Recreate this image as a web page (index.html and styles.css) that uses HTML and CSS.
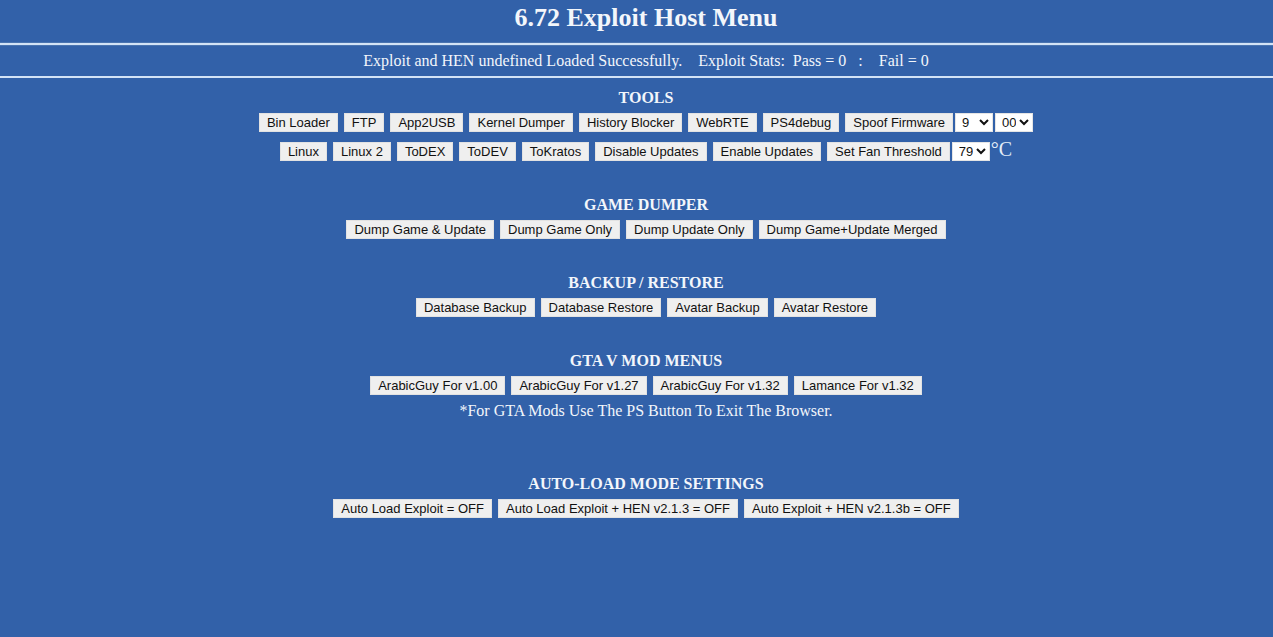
FILE: index.html
```html
<!DOCTYPE html>
<html>
<head>
<meta charset="utf-8">
<title>6.72 Exploit Host Menu</title>
<link rel="stylesheet" href="styles.css">
</head>
<body>
<header class="top">
  <h1 class="title">6.72 Exploit Host Menu</h1>
  <div class="status">Exploit and HEN undefined Loaded Successfully.&nbsp;&nbsp;&nbsp; Exploit Stats:&nbsp; Pass = 0 &nbsp;&nbsp;:&nbsp;&nbsp;&nbsp; Fail = 0</div>
</header>
<main class="content">
  <section class="section tools">
    <h2 class="heading">TOOLS</h2>
    <div class="row">
      <button class="btn">Bin Loader</button>
      <button class="btn">FTP</button>
      <button class="btn">App2USB</button>
      <button class="btn">Kernel Dumper</button>
      <button class="btn">History Blocker</button>
      <button class="btn">WebRTE</button>
      <button class="btn">PS4debug</button>
      <span class="group">
        <button class="btn">Spoof Firmware</button>
        <select class="sel sel-9"><option>9</option></select>
        <select class="sel sel-00"><option>00</option></select>
      </span>
    </div>
    <div class="row row2">
      <button class="btn">Linux</button>
      <button class="btn">Linux 2</button>
      <button class="btn">ToDEX</button>
      <button class="btn">ToDEV</button>
      <button class="btn">ToKratos</button>
      <button class="btn">Disable Updates</button>
      <button class="btn">Enable Updates</button>
      <span class="group">
        <button class="btn">Set Fan Threshold</button>
        <select class="sel sel-79"><option>79</option></select>
        <span class="deg">°C</span>
      </span>
    </div>
  </section>

  <section class="section">
    <h2 class="heading">GAME DUMPER</h2>
    <div class="row">
      <button class="btn">Dump Game &amp; Update</button>
      <button class="btn">Dump Game Only</button>
      <button class="btn">Dump Update Only</button>
      <button class="btn">Dump Game+Update Merged</button>
    </div>
  </section>

  <section class="section">
    <h2 class="heading">BACKUP / RESTORE</h2>
    <div class="row">
      <button class="btn">Database Backup</button>
      <button class="btn">Database Restore</button>
      <button class="btn">Avatar Backup</button>
      <button class="btn">Avatar Restore</button>
    </div>
  </section>

  <section class="section gta">
    <h2 class="heading">GTA V MOD MENUS</h2>
    <div class="row">
      <button class="btn">ArabicGuy For v1.00</button>
      <button class="btn">ArabicGuy For v1.27</button>
      <button class="btn">ArabicGuy For v1.32</button>
      <button class="btn">Lamance For v1.32</button>
    </div>
    <p class="note">*For GTA Mods Use The PS Button To Exit The Browser.</p>
  </section>

  <section class="section auto">
    <h2 class="heading">AUTO-LOAD MODE SETTINGS</h2>
    <div class="row">
      <button class="btn">Auto Load Exploit = OFF</button>
      <button class="btn">Auto Load Exploit + HEN v2.1.3 = OFF</button>
      <button class="btn">Auto Exploit + HEN v2.1.3b = OFF</button>
    </div>
  </section>
</main>
</body>
</html>
```

FILE: styles.css
```css
html, body {
  margin: 0;
  padding: 0;
  height: 100%;
}
body {
  background: #3261a9;
  color: #f3f6fb;
  font-family: "Liberation Serif", "Times New Roman", serif;
}
.top {
  padding-left: 19px;
}
.title {
  margin: 0;
  padding-top: 3px;
  font-size: 26px;
  line-height: 30px;
  font-weight: bold;
  text-align: center;
}
.status {
  margin-top: 10px;
  border-top: 2px solid #d3e3f6;
  border-bottom: 2px solid #d3e3f6;
  margin-left: -19px;
  padding-left: 19px;
  height: 31px;
  line-height: 31px;
  font-size: 16px;
  text-align: center;
  box-shadow: inset 0 1px 0 #4a74b0, 0 -1px 0 #4a74b0;
}
.content {
  padding-left: 19px;
  padding-top: 11px;
}
.section {
  display: flex;
  flex-direction: column;
  align-items: center;
  margin-bottom: 35px;
}
.section.gta {
  margin-bottom: 55px;
}
.heading {
  margin: 0 0 6px;
  font-size: 16px;
  line-height: 18px;
  font-weight: bold;
}
.row {
  display: flex;
  justify-content: center;
  align-items: center;
  gap: 6px;
  height: 19px;
}
.row2 {
  margin-top: 10px;
}
.group {
  display: flex;
  align-items: center;
  gap: 2px;
}
.btn {
  font-family: "Liberation Sans", Arial, sans-serif;
  font-size: 13px;
  line-height: 15px;
  height: 19px;
  padding: 0 7px;
  margin: 0;
  color: #111;
  background: #efefef;
  border: 1px solid #e2e2e2;
  border-radius: 0;
}
.sel {
  font-family: "Liberation Sans", Arial, sans-serif;
  font-size: 13px;
  height: 19px;
  margin: 0;
  padding: 0 0 0 2px;
  color: #111;
  background: #fff;
  border: 1px solid #e5e5e5;
  border-radius: 0;
}
.sel-9 { width: 38px; }
.sel-00 { width: 38px; }
.sel-79 { width: 38px; }
.deg {
  font-size: 20px;
  line-height: 19px;
  color: #e4edf8;
  margin-left: -1px;
  position: relative;
  top: -2px;
}
.note {
  margin: 7px 0 0;
  font-size: 16px;
  line-height: 18px;
}
```
